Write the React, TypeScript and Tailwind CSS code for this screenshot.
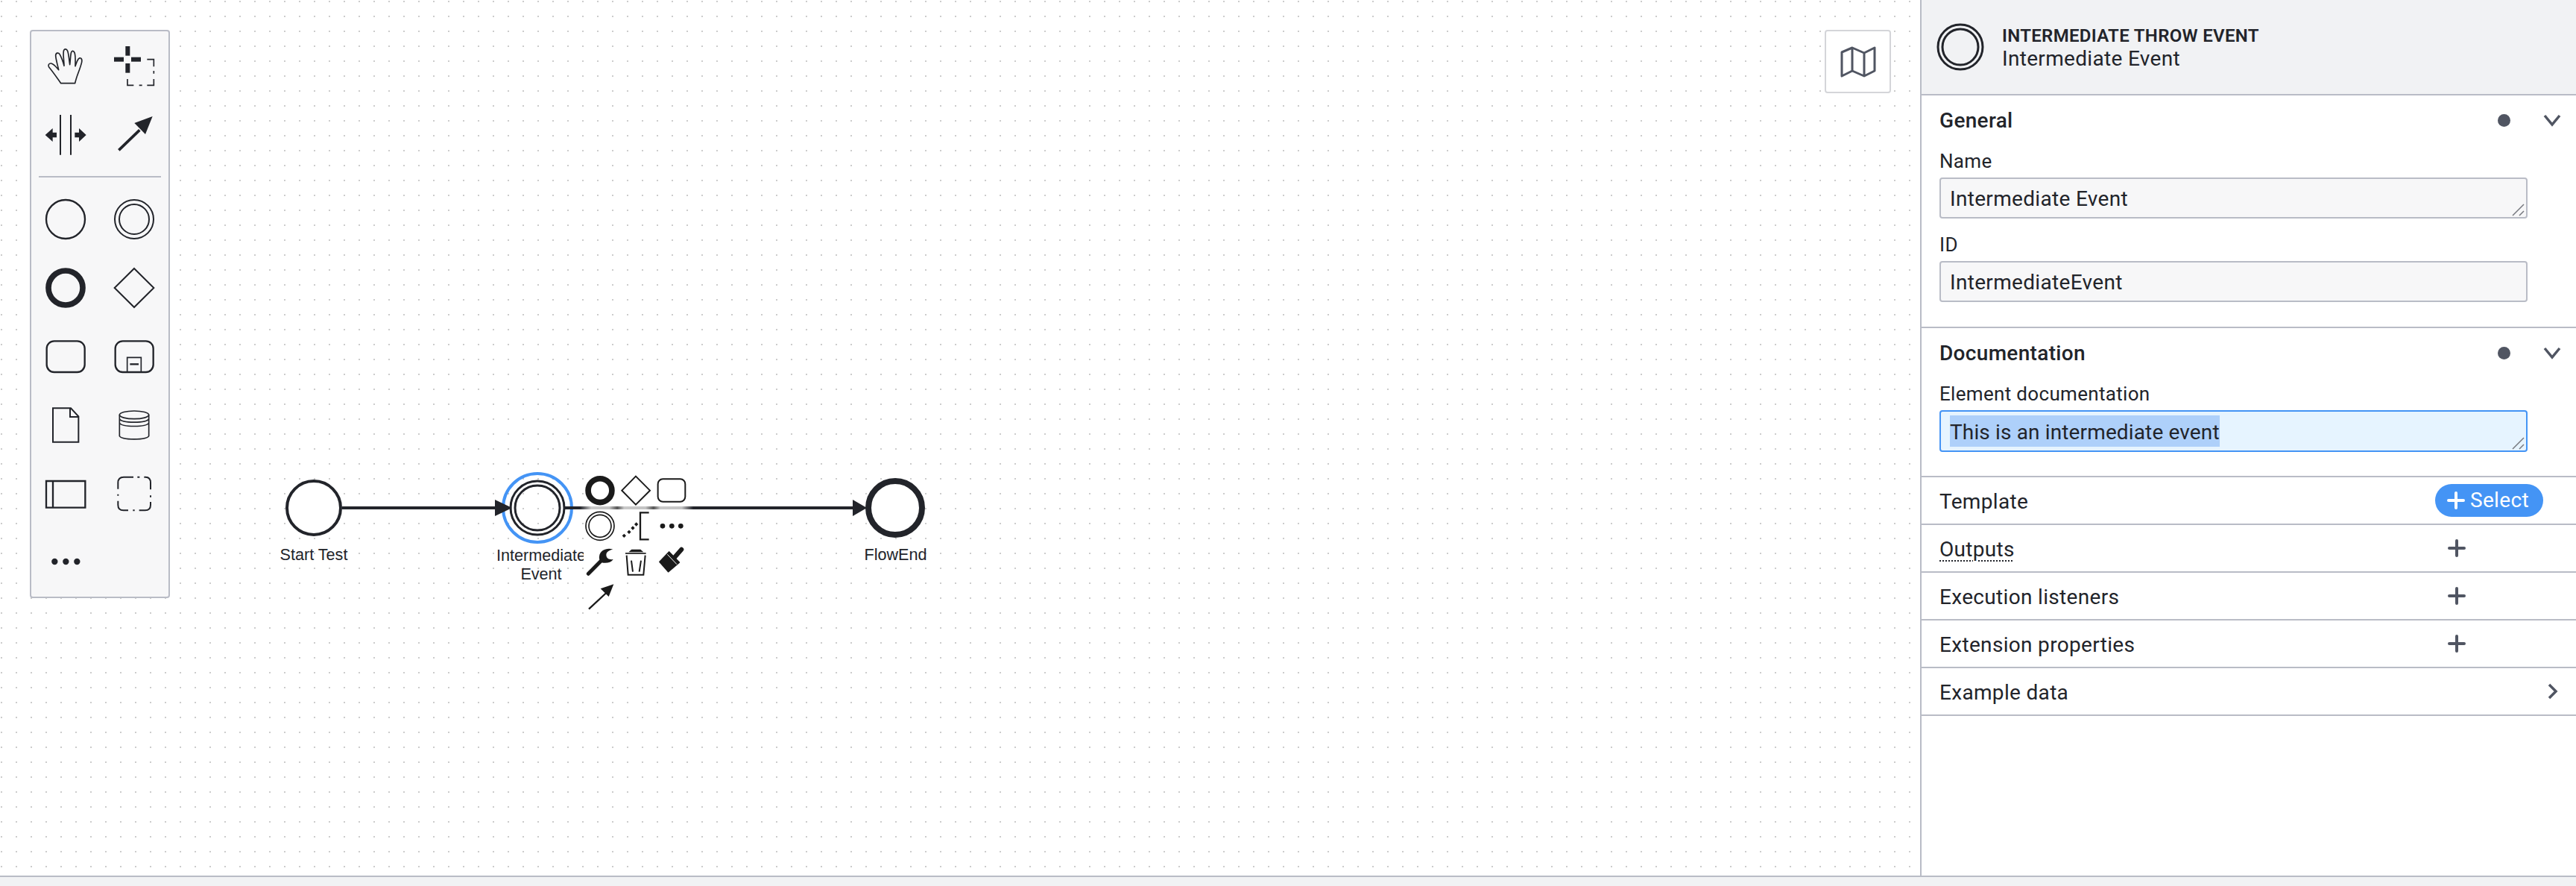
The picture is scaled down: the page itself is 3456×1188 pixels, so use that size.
import React from "react";

const INK = "#22242a";
const PAD = "#1a1a1a";

function Cell({ vb, children }: { vb: string; children: React.ReactNode }) {
  return (
    <div className="w-[92px] h-[92px]">
      <svg width="92" height="92" viewBox={vb} fill="none" stroke={INK} strokeWidth="6">
        {children}
      </svg>
    </div>
  );
}

function Palette() {
  return (
    <div className="absolute left-[40px] top-[40px] w-[188px] rounded-[4px] border-2 border-[#b9bcc6] bg-[#f7f7f8]">
      <div className="grid grid-cols-2">
        <Cell vb="126 126 276 276">
          <path
            strokeWidth="5"
            strokeLinejoin="round"
            d="M245 335 L302 335 C308 305 322 280 329 250 C332 235 322 228 315 238 C309 247 306 258 303 266 C303 245 305 225 300 212 C296 202 288 203 286 213 C283 228 283 248 281 260 C278 240 277 220 272 205 C268 195 258 195 256 206 C253 222 258 245 258 265 C254 250 247 230 240 218 C235 210 224 212 224 224 C225 240 232 262 236 281 C226 270 218 258 206 255 C197 254 192 262 197 270 C214 290 230 314 245 335 Z"
          />
        </Cell>
        <Cell vb="402 126 276 276">
          <g fill={INK} stroke="none">
            <rect x="505" y="186" width="18" height="38" />
            <rect x="505" y="255" width="18" height="38" />
            <rect x="459" y="230" width="39" height="18" />
            <rect x="528" y="230" width="39" height="18" />
          </g>
          <path
            strokeWidth="5"
            d="M592 239 H619 V268 M619 285 V296 M619 318 V343 H592 M560 343 H572 M538 343 H513 V318"
          />
        </Cell>
        <Cell vb="126 402 276 276">
          <path d="M243 462 V623 M285 462 V623" />
          <g fill={INK} stroke="none">
            <path d="M182 543 L212 516 V533 H228 V553 H212 V570 Z" />
            <path d="M347 543 L318 516 V533 H301 V553 H318 V570 Z" />
          </g>
        </Cell>
        <Cell vb="402 402 276 276">
          <path d="M478 604 L562 523" strokeWidth="11" />
          <path d="M614 468 L541 495 L585 540 Z" fill={INK} stroke="none" />
        </Cell>
      </div>
      <div className="mx-[10px] my-[10px] h-[2px] bg-[#b9bcc6]" />
      <div className="grid grid-cols-2">
        <Cell vb="126 747 276 276">
          <circle cx="264" cy="885" r="78" strokeWidth="7" />
        </Cell>
        <Cell vb="402 747 276 276">
          <circle cx="540" cy="885" r="78" />
          <circle cx="540" cy="885" r="60" />
        </Cell>
        <Cell vb="126 1023 276 276">
          <circle cx="264" cy="1161" r="69" strokeWidth="23" />
        </Cell>
        <Cell vb="402 1023 276 276">
          <path d="M540 1083 L619 1161 L540 1239 L461 1161 Z" />
        </Cell>
        <Cell vb="126 39 276 276">
          <rect x="188" y="115" width="153" height="125" rx="30" strokeWidth="7" />
        </Cell>
        <Cell vb="402 39 276 276">
          <rect x="464" y="115" width="153" height="125" rx="30" strokeWidth="7" />
          <path d="M512 238 V181 H568 V238" strokeWidth="5" />
          <path d="M523 208 H558" strokeWidth="7" />
        </Cell>
        <Cell vb="126 315 276 276">
          <path d="M213 385 H285 L316 418 V521 H213 Z M282 385 V420 H316" />
        </Cell>
        <Cell vb="402 315 276 276">
          <ellipse cx="540" cy="412" rx="59" ry="16" strokeWidth="5" />
          <path
            strokeWidth="5"
            d="M481 412 V497 C490 514 590 514 599 497 V412 M481 428 C490 446 590 446 599 428 M481 444 C490 462 590 462 599 444"
          />
        </Cell>
        <Cell vb="126 591 276 276">
          <path d="M186 678 H343 V785 H186 Z M213 678 V785" strokeWidth="7" />
        </Cell>
        <Cell vb="402 591 276 276">
          <path d="M537 662 H498 Q475 662 475 685 V710 M553 662 H562 M580 662 H586 Q606 662 606 685 V712 M606 736 V743 M606 762 V774 Q606 796 584 796 H560 M535 796 H542 M516 796 H497 Q475 796 475 774 V758 M475 731 V737" />
        </Cell>
        <Cell vb="126 867 276 276">
          <g fill={INK} stroke="none">
            <circle cx="220" cy="1002" r="12.5" />
            <circle cx="265" cy="1002" r="12.5" />
            <circle cx="310" cy="1002" r="12.5" />
          </g>
        </Cell>
      </div>
    </div>
  );
}

function Diagram() {
  const label = { fontFamily: "'Liberation Sans', sans-serif", fontSize: 21.6, fill: INK, stroke: "none" };
  return (
    <svg className="absolute left-0 top-0" width="2576" height="1174" fill="none" stroke={INK}>
      <defs>
        <linearGradient id="padline" gradientUnits="userSpaceOnUse" x1="778" y1="0" x2="930" y2="0">
          <stop offset="0" stopColor={INK} />
          <stop offset="0.1" stopColor="#c9c9c9" />
          <stop offset="0.26" stopColor="#c4c4c4" />
          <stop offset="0.33" stopColor="#555" />
          <stop offset="0.39" stopColor="#c9c9c9" />
          <stop offset="0.58" stopColor="#c4c4c4" />
          <stop offset="0.65" stopColor="#555" />
          <stop offset="0.71" stopColor="#c9c9c9" />
          <stop offset="0.9" stopColor="#c4c4c4" />
          <stop offset="1" stopColor={INK} />
        </linearGradient>
      </defs>

      <circle cx="421" cy="681" r="36" strokeWidth="4" fill="#fff" />
      <path d="M459 681 H670" strokeWidth="4" />
      <circle cx="721" cy="681" r="46" stroke="#4494f5" strokeWidth="4" />
      <circle cx="721" cy="681" r="36" strokeWidth="3" />
      <circle cx="721" cy="681" r="30" strokeWidth="3" />
      <path d="M664 670 L687 681 L664 692 Z" fill={INK} stroke="none" />
      <path d="M758 681 H1148" strokeWidth="4" />
      <path d="M1144 670 L1163 681 L1144 692 Z" fill={INK} stroke="none" />
      <circle cx="1201" cy="681" r="36" strokeWidth="8" fill="#fff" />

      <text x="421" y="751" textAnchor="middle" style={label}>Start Test</text>
      <text x="726" y="752" textAnchor="middle" style={label}>Intermediate</text>
      <text x="726" y="777" textAnchor="middle" style={label}>Event</text>
      <text x="1201.5" y="751" textAnchor="middle" style={label}>FlowEnd</text>

      {/* context pad */}
      <rect x="783" y="631" width="147" height="142" fill="#fff" stroke="none" />
      <rect x="783" y="773" width="55" height="47" fill="#fff" stroke="none" />
      <rect x="778" y="679" width="152" height="4" fill="url(#padline)" stroke="none" />
      <g transform="translate(640 600) scale(0.3333)" stroke={PAD} strokeWidth="6">
        <circle cx="495" cy="173" r="47.75" strokeWidth="23" />
        <path d="M639 116 L696 173 L639 230 L583 173 Z" />
        <rect x="728" y="127" width="110" height="91" rx="20" />
        <circle cx="495" cy="316" r="57" strokeWidth="5" />
        <circle cx="495" cy="316" r="45" strokeWidth="5" />
        <path d="M692 262 H657 V370 H692" strokeWidth="7" />
        <g fill={PAD} stroke="none">
          <path d="M592 347 l8 8 l-8 8 l-8 -8 Z" />
          <path d="M612 332 l8 8 l-8 8 l-8 -8 Z" />
          <path d="M627 316 l8 8 l-8 8 l-8 -8 Z" />
          <path d="M641 301 l8 8 l-8 8 l-8 -8 Z" />
          <circle cx="747" cy="316" r="10" />
          <circle cx="784" cy="316" r="10" />
          <circle cx="820" cy="316" r="10" />
        </g>
      </g>
      <g transform="translate(770 720) scale(0.3333)" stroke={PAD}>
        {/* wrench */}
        <path d="M58 148 L110 95" strokeWidth="15" strokeLinecap="round" />
        <path
          fill={PAD}
          stroke="none"
          d="M157 50 C135 42 105 52 102 78 C100 88 104 95 110 102 L118 104 C135 106 150 102 158 90 C145 92 130 88 130 72 C130 58 145 52 157 50 Z"
        />
        {/* trash */}
        <path d="M232 50 H268 L280 61 H220 Z" fill={PAD} stroke="none" />
        <path d="M207 66 H290" strokeWidth="5" />
        <path d="M212 74 L218 152 H280 L287 74" strokeWidth="6" />
        <path d="M231 95 L237 140 M270 95 L263 140" strokeWidth="6" />
        {/* brush */}
        <path d="M400 88 L433 50" strokeWidth="18" strokeLinecap="round" />
        <path d="M345 100 L383 60 L424 102 L380 140 Z" fill={PAD} stroke={PAD} strokeWidth="5" strokeLinejoin="round" />
        <path d="M376 70 L414 110" stroke="#fff" strokeWidth="3" />
        {/* arrow */}
        <path d="M60 290 L130 225" strokeWidth="7" />
        <path d="M160 190 L107 208 L140 240 Z" fill={PAD} stroke="none" />
      </g>
    </svg>
  );
}

function Handle() {
  return (
    <svg className="absolute right-[2px] bottom-[1px]" width="17" height="17" stroke="#77797f" strokeWidth="1.5">
      <path d="M16 1 L1 16 M16 10 L10 16" />
    </svg>
  );
}

function Dot() {
  return <span className="w-[17px] h-[17px] rounded-full bg-[#505562]" />;
}

function Chevron() {
  return (
    <svg width="24" height="24" viewBox="0 0 24 24" fill="none" stroke="#505562" strokeWidth="3.5">
      <path d="M2 6 L12 18 L22 6" />
    </svg>
  );
}

function SectionTitle({ title }: { title: string }) {
  return (
    <div className="h-[66px] flex items-center justify-between pr-[20px]">
      <span className="text-[28px] font-medium pt-[2px]">{title}</span>
      <span className="flex items-center gap-[44px]">
        <Dot />
        <Chevron />
      </span>
    </div>
  );
}

function Field({ children, focus }: { children: React.ReactNode; focus?: boolean }) {
  return (
    <div
      className={
        focus
          ? "relative w-[789px] h-[56px] rounded-[4px] border-2 border-[#4494f5] bg-[#e6f4ff] pl-[12px] flex items-center text-[28px]"
          : "relative w-[789px] h-[55px] rounded-[4px] border-2 border-[#b9bcc6] bg-[#f7f7f8] pl-[12px] pt-[3px] flex items-center text-[28px]"
      }
    >
      {children}
    </div>
  );
}

function Plus({ color }: { color: string }) {
  return (
    <svg width="24" height="24" viewBox="0 0 24 24" fill="none" stroke={color} strokeWidth="4" strokeLinecap="round">
      <path d="M12 2 V22 M2 12 H22" />
    </svg>
  );
}

function Row({ title, dotted }: { title: string; dotted?: boolean }) {
  return (
    <div className="h-[64px] border-b-2 border-[#b9bcc6] pl-[24px] pr-[148px] flex items-center justify-between">
      <span className={dotted ? "text-[28px] pt-[4px] underline decoration-dotted decoration-2 underline-offset-[5px]" : "text-[28px] pt-[4px]"}>
        {title}
      </span>
      <Plus color="#505562" />
    </div>
  );
}

function Panel() {
  return (
    <aside className="w-[880px] h-full border-l-2 border-[#b9bcc6] bg-white text-[#22242a] font-[Roboto,sans-serif] tracking-[0.02em]">
      <header className="h-[128px] border-b-2 border-[#b9bcc6] bg-[#f1f2f4] pl-[20px] flex items-center gap-[24px]">
        <svg width="64" height="64" fill="none" stroke={INK} strokeWidth="3">
          <circle cx="32" cy="32" r="30" />
          <circle cx="32" cy="32" r="24" />
        </svg>
        <div className="flex flex-col pt-[1px]">
          <span className="text-[24px] font-semibold leading-[30px]">INTERMEDIATE THROW EVENT</span>
          <span className="text-[28px] leading-[32px]">Intermediate Event</span>
        </div>
      </header>

      <section className="h-[312px] border-b-2 border-[#b9bcc6] pl-[24px]">
        <SectionTitle title="General" />
        <div className="h-[44px] flex items-center text-[26px]">Name</div>
        <Field>
          Intermediate Event
          <Handle />
        </Field>
        <div className="mt-[14px] h-[43px] flex items-center text-[26px]">ID</div>
        <Field>IntermediateEvent</Field>
      </section>

      <section className="h-[200px] border-b-2 border-[#b9bcc6] pl-[24px]">
        <SectionTitle title="Documentation" />
        <div className="h-[44px] flex items-center text-[26px]">Element documentation</div>
        <Field focus>
          <span className="bg-[#aed0fa] h-[42px] pt-[3px] flex items-center tracking-[0.005em]">This is an intermediate event</span>
          <Handle />
        </Field>
      </section>

      <div className="h-[64px] border-b-2 border-[#b9bcc6] pl-[24px] pr-[44px] flex items-center justify-between">
        <span className="text-[28px] pt-[3px]">Template</span>
        <span className="w-[145px] h-[44px] rounded-full bg-[#4494f5] text-white text-[28px] pl-[16px] flex items-center gap-[7px]">
          <Plus color="#ffffff" />
          Select
        </span>
      </div>
      <Row title="Outputs" dotted />
      <Row title="Execution listeners" />
      <Row title="Extension properties" />
      <div className="h-[64px] border-b-2 border-[#b9bcc6] pl-[24px] pr-[20px] flex items-center justify-between">
        <span className="text-[28px] pt-[4px]">Example data</span>
        <svg width="24" height="24" viewBox="0 0 24 24" fill="none" stroke="#505562" strokeWidth="3.5">
          <path d="M8 3 L17 12 L8 21" />
        </svg>
      </div>
    </aside>
  );
}

export default function App() {
  return (
    <div className="w-[3456px] h-[1188px] flex flex-col bg-white overflow-hidden">
      <div className="flex h-[1174px]">
        <main className="relative flex-1 bg-white bg-[radial-gradient(circle_at_2px_2px,#cccccc_1.4px,transparent_1.5px)] bg-[length:20px_20px]">
          <Diagram />
          <Palette />
          <div className="absolute left-[2448px] top-[40px] w-[89px] h-[85px] rounded-[4px] border-2 border-[#d4d5d9] bg-white flex items-center justify-center">
            <svg width="48" height="42" viewBox="0 0 48 42" fill="none" stroke="#505562" strokeWidth="3" strokeLinejoin="round">
              <path d="M2 8 L16 2 L32 9 L46 2 V33 L32 40 L16 33 L2 40 Z M16 2 V33 M32 9 V40" />
            </svg>
          </div>
        </main>
        <Panel />
      </div>
      <div className="h-[14px] border-t-2 border-[#b9bcc6] bg-[#f1f2f4]" />
    </div>
  );
}
